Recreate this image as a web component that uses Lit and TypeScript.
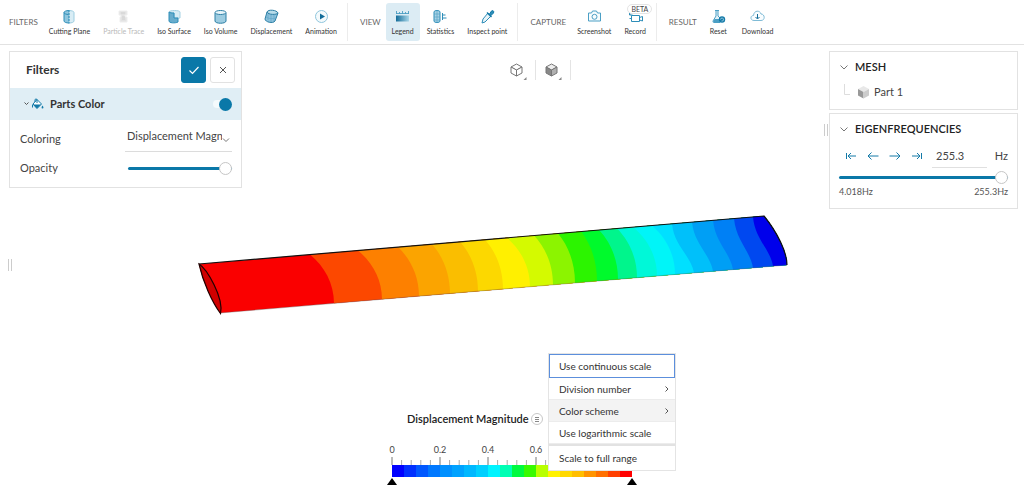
import { LitElement, html, css, svg } from "lit";
import { customElement, property, state } from "lit/decorators.js";
import { classMap } from "lit/directives/class-map.js";

const FONT = css`Lato, "Open Sans", sans-serif`;

const ICONS: Record<string, unknown> = {
  cutting: svg`<path d="M2 3.500v8.500c0 1 2 2 5 2V1.500c-3 0-5 1-5 2z" fill="#8fc6de" stroke="#2d8db8"/><path d="M2 3.500c0 1 2 2 5 2" fill="none" stroke="#2d8db8"/><path d="M7 1.500c3 0 5 1 5 2v8.500c0 1-2 2-5 2z" fill="#d9edf5" stroke="#9ccde0"/><path d="M7 1v13.500" stroke="#2d8db8" stroke-dasharray="2 1"/>`,
  particle: svg`<path d="M3 2h8v4H9v2h2v5H4V8h1V6H3z" fill="#e3e3e3" stroke="#eee"/><path d="M5 4h4M6 8h3M6 10h3" stroke="#d0d0d0"/>`,
  surface: svg`<path d="M2 3c0-2 11-2 11 0v6H7V4z" fill="#d9edf5" stroke="#a5d2e4"/><path d="M2 3c1 1 3 1 5 1v5h4v4c-3 1.500-9 1-9-1z" fill="#68adcd" stroke="#2d8db8"/>`,
  volume: svg`<path d="M2 4v8c0 3 11 3 11 0V4" fill="#9ccce1" stroke="#2d7fa5"/><ellipse cx="7.500" cy="3.500" rx="5.500" ry="2" fill="#e8f5fa" stroke="#2d7fa5"/>`,
  displacement: svg`<path d="M3 3 1 10c0 3 8 5 10 2l3-8" fill="#8dc2dc" stroke="#2d7fa5"/><path d="M3 3c1-3 10-2 11 1-1 2-10 2-11-1z" fill="#b8dcea" stroke="#2d7fa5"/><path d="M4 5v6M7 6v7M10 6v6M2 8c3 2 7 2 10 1" stroke="#5aa3c6" stroke-width=".6" fill="none"/>`,
  animation: svg`<circle cx="7.500" cy="7.500" r="6" fill="#f4fafc" stroke="#8fc6dd"/><path d="M6 4.500v6l5-3z" fill="#126c99"/>`,
  legend: svg`<path d="M1.500 2v2.500M4.500 3v1.500M7.500 2v2.500M10.500 3v1.500M13.500 2v2.500M1 4.500h13" stroke="#3a94bc" stroke-width=".8" fill="none"/><path d="M1 6.500h13v6H1z" fill="url(#lg)"/>`,
  statistics: svg`<path d="M1 3c0-2 6-2 6 0v9c0 2-6 2-6 0z" fill="#a9d3e5" stroke="#2d8db8"/><path d="M4 1v13M1 5h6M1 8h6M1 11h6" stroke="#5aa3c6" stroke-width=".7"/><path d="M9.500 4v7M9.500 6h3M9.500 9h4" stroke="#2d8db8"/>`,
  inspect: svg`<path d="m8 4 3 3-6 6-3 1 1-4z" fill="#e8f4f9" stroke="#2d8db8"/><path d="m7 3.500 4.500 4.500" stroke="#147aa8" stroke-width="1.500"/><path d="m9.500 5 2-3c1-1 3 0 2 2l-2.500 2.500z" fill="#2d8db8" stroke="#147aa8"/>`,
  screenshot: svg`<path d="M1.500 4h3l1-2h4l1 2h3v8h-12z" fill="#f7fcfe" stroke="#4b9fc5"/><circle cx="7.500" cy="7.800" r="2.500" fill="none" stroke="#4b9fc5"/>`,
  record: svg`<path d="M3.500 6.500h8v6h-8zM11.500 8.500l3-1v4.500l-3-1M3.500 9.500h-2" fill="none" stroke="#2d8db8"/><path d="M1.500 3v3h3M1.500 6l2-2M6 4.500h5" fill="none" stroke="#2d8db8"/>`,
  reset: svg`<path d="M4 1.500h4M5 2v5l-3 5c0 1 0 1.500 1 1.500h6V9L7 7V2" fill="#e4f2f8" stroke="#4b9fc5"/><path d="m3.500 10-1.500 3h6v-3z" fill="#4b9fc5"/><circle cx="11" cy="10.500" r="3.200" fill="#147aa8"/><path d="M9.500 10.500a1.500 1.500 0 1 1 1 1.500" stroke="#a9d3e5" fill="none" stroke-width=".8"/>`,
  download: svg`<path d="M4 11.500c-4 0-4-5-.5-5C4 1 10 1 11 5c4 0 4.500 6.500 0 6.500z" fill="#f9fdff" stroke="#7fbbd6"/><path d="M7.500 5v4.500M5.500 8l2 2 2-2" fill="none" stroke="#126c99"/>`,
};

type Tool = { id: string; label: string; disabled?: boolean; badge?: string };
const GROUPS: { title: string; tools: Tool[] }[] = [
  {
    title: "FILTERS",
    tools: [
      { id: "cutting", label: "Cutting Plane" },
      { id: "particle", label: "Particle Trace", disabled: true },
      { id: "surface", label: "Iso Surface" },
      { id: "volume", label: "Iso Volume" },
      { id: "displacement", label: "Displacement" },
      { id: "animation", label: "Animation" },
    ],
  },
  {
    title: "VIEW",
    tools: [
      { id: "legend", label: "Legend" },
      { id: "statistics", label: "Statistics" },
      { id: "inspect", label: "Inspect point" },
    ],
  },
  {
    title: "CAPTURE",
    tools: [
      { id: "screenshot", label: "Screenshot" },
      { id: "record", label: "Record", badge: "BETA" },
    ],
  },
  {
    title: "RESULT",
    tools: [
      { id: "reset", label: "Reset" },
      { id: "download", label: "Download" },
    ],
  },
];

@customElement("post-toolbar")
class PostToolbar extends LitElement {
  @state() active = "legend";

  static styles = css`
    :host { display: block; border-bottom: 1px solid #e2e2e2; background: #fff; }
    nav { display: flex; align-items: center; height: 44px; padding-left: 9px; }
    .group { display: flex; align-items: center; gap: 1px; }
    .group + .group { margin-left: 4px; padding-left: 12px; border-left: 1px solid #ececec; }
    .group:last-child { gap: 3px; }
    .title { font: 8px/12px ${FONT}; color: #666; margin-right: 4px; }
    button {
      display: flex; flex-direction: column; align-items: center; justify-content: flex-end; gap: 2px;
      position: relative; height: 38px; padding: 0 6px 5px; border: 0; border-radius: 3px;
      background: none; font: 7px/10px ${FONT}; color: #333; white-space: nowrap;
    }
    button:disabled { color: #b9b9b9; }
    button.active { background: #dcecf4; }
    svg { display: block; width: 15px; height: 15px; }
    .badge {
      position: absolute; top: 1px; left: 9px; padding: 0 3px; border: 1px solid #e4e4e4;
      border-radius: 6px; background: #fff; font: 7px/8px ${FONT}; color: #444;
    }
  `;

  render() {
    return html`<nav>
      ${GROUPS.map(
        (g) => html`<div class="group">
          <span class="title">${g.title}</span>
          ${g.tools.map(
            (t) => html`<button
              class=${classMap({ active: t.id === this.active })}
              ?disabled=${t.disabled}
              @click=${() => (this.active = t.id)}
            >
              <svg viewBox="0 0 15 15" aria-hidden="true">
                <defs><linearGradient id="lg"><stop stop-color="#126c99" /><stop offset="1" stop-color="#a9d6e8" /></linearGradient></defs>
                ${ICONS[t.id]}
              </svg>
              ${t.label} ${t.badge ? html`<span class="badge">${t.badge}</span>` : ""}
            </button>`
          )}
        </div>`
      )}
    </nav>`;
  }
}

const rangeStyles = css`
  input[type="range"] {
    appearance: none; display: block; width: 100%; height: 14px; margin: 0; background: none;
  }
  input[type="range"]::-webkit-slider-runnable-track { height: 3px; border-radius: 2px; background: #0a78a8; }
  input[type="range"]::-webkit-slider-thumb {
    appearance: none; box-sizing: border-box; width: 13px; height: 13px; margin-top: -5px;
    border: 1px solid #c6c6c6; border-radius: 50%; background: #fff;
  }
`;

@customElement("filters-panel")
class FiltersPanel extends LitElement {
  static styles = [
    rangeStyles,
    css`
      :host { display: block; box-sizing: border-box; border: 1px solid #e2e2e2; background: #fff; font: 11px/14px ${FONT}; color: #444; }
      header { display: flex; align-items: center; gap: 4px; height: 36px; padding: 0 6px 0 16px; }
      h2 { flex: 1; margin: 0; font-size: 12px; line-height: 16px; font-weight: 700; color: #333; }
      header button {
        display: grid; place-items: center; width: 25px; height: 26px; padding: 0;
        border: 1px solid #e2e2e2; border-radius: 3px; background: #fff;
      }
      header .apply { border-color: #0a78a8; background: #0a78a8; }
      .section { display: flex; align-items: center; height: 32px; padding: 0 9px 0 14px; background: #e0eef5; }
      h3 { flex: 1; margin: 0 0 0 6px; font-size: 11px; line-height: 14px; font-weight: 700; color: #333; }
      .toggle {
        appearance: none; display: flex; justify-content: flex-end; align-items: center; width: 19px; height: 8px;
        margin: 0; border-radius: 4px; background: #f4fafc;
      }
      .toggle::before { content: ""; width: 13px; height: 13px; flex: none; border-radius: 50%; background: #0a78a8; }
      .toggle:not(:checked) { justify-content: flex-start; }
      .rows { display: grid; grid-template-columns: 1fr 107px; row-gap: 9px; align-items: center; padding: 6px 9px 12px 10px; }
      .pick { display: flex; align-items: flex-start; height: 25px; border-bottom: 1px solid #dcdcdc; }
      select {
        appearance: none; flex: 1; min-width: 0; height: 20px; padding: 0 0 0 2px; border: 0; border-radius: 0;
        background: none; font: 11px/14px ${FONT}; color: #444; text-overflow: clip;
      }
      .pick svg { flex: none; margin: 10px 2px 0 0; }
      .slide { padding-left: 3px; }
      svg { display: block; }
    `,
  ];

  render() {
    return html`
      <header>
        <h2>Filters</h2>
        <button class="apply" aria-label="Apply">
          <svg width="12" height="12" viewBox="0 0 12 12"><path d="m1.500 6.500 3 3 6-6.500" fill="none" stroke="#fff" stroke-width="1.200" /></svg>
        </button>
        <button aria-label="Close">
          <svg width="10" height="10" viewBox="0 0 10 10"><path d="m2 2 6 6m0-6-6 6" stroke="#555" /></svg>
        </button>
      </header>
      <div class="section">
        <svg width="20" height="14" viewBox="0 0 20 14">
          <path d="m.5 5.500 2 2 2-2" fill="none" stroke="#555" />
          <path d="m9 7 4-4.500 4.500 4.500-4.500 4.500z" fill="#fff" stroke="#147aa8" />
          <path d="M9 7.500h8L13 11.500z" fill="#147aa8" />
          <path d="M11 5V3c0-1.500 2-1.500 2 0v3M8.500 7.500v3" fill="none" stroke="#147aa8" />
          <path d="M18.500 8.500c-1 1.500-1.500 3 0 3s1-1.500 0-3z" fill="#147aa8" />
        </svg>
        <h3><label for="on">Parts Color</label></h3>
        <input id="on" class="toggle" type="checkbox" checked />
      </div>
      <div class="rows">
        <label for="coloring">Coloring</label>
        <div class="pick">
          <select id="coloring"><option>Displacement Magnitude</option></select>
          <svg width="8" height="8" viewBox="0 0 8 8"><path d="m1 2.500 3 3 3-3" fill="none" stroke="#777" /></svg>
        </div>
        <label for="opacity">Opacity</label>
        <div class="slide"><input id="opacity" type="range" value="100" /></div>
      </div>
    `;
  }
}

@customElement("result-panels")
class ResultPanels extends LitElement {
  static styles = [
    rangeStyles,
    css`
      :host { display: flex; flex-direction: column; gap: 3px; font: 11px/14px ${FONT}; color: #444; }
      section { border: 1px solid #e2e2e2; background: #fff; padding: 8px 9px; }
      h2 { display: flex; align-items: center; gap: 6px; margin: 0; font-size: 11px; line-height: 14px; font-weight: 600; color: #222; }
      svg { display: block; flex: none; }
      .part { display: flex; align-items: center; gap: 4px; padding: 10px 0 1px 5px; }
      .part .cube { margin-left: 1px; }
      .step { display: flex; align-items: center; gap: 8px; padding: 8px 0 2px 5px; }
      .step button { padding: 0; border: 0; background: none; }
      .value { display: flex; flex: 1; justify-content: space-between; align-items: center; }
      .value input {
        box-sizing: border-box; width: 55px; height: 24px; padding: 0 0 0 4px; border: 0; border-bottom: 1px solid #e0e0e0;
        font: 11px/14px ${FONT}; color: #444; outline: 0;
      }
      .ends { display: flex; justify-content: space-between; padding: 2px 0; font-size: 9px; line-height: 12px; color: #555; }
    `,
  ];

  private chevron = html`<svg width="10" height="10" viewBox="0 0 10 10"><path d="m1.500 3.500 3.500 3.500 3.500-3.500" fill="none" stroke="#777" /></svg>`;

  private arrow(label: string, d: string) {
    return html`<button aria-label=${label}><svg width="14" height="12" viewBox="0 0 14 12"><path d=${d} fill="none" stroke="#147aa8" /></svg></button>`;
  }

  render() {
    return html`
      <section>
        <h2>${this.chevron}MESH</h2>
        <div class="part">
          <svg width="8" height="16" viewBox="0 0 8 16"><path d="M.5 0v10.500H6" fill="none" stroke="#ddd" /></svg>
          <svg class="cube" width="13" height="14" viewBox="0 0 13 14">
            <path d="m1 4 5.500-3L12 4 6.500 7z" fill="#e8e8e8" /><path d="m1 4 5.500 3v6.500L1 10.500z" fill="#999" /><path d="m12 4-5.500 3v6.500l5.500-3z" fill="#ccc" />
          </svg>
          Part 1
        </div>
      </section>
      <section>
        <h2>${this.chevron}EIGENFREQUENCIES</h2>
        <div class="step">
          ${this.arrow("First", "M2.500 3v6M12 6H4M7 3 4 6l3 3")} ${this.arrow("Previous", "M12.500 6H2M5.500 2.500 2 6l3.500 3.500")}
          ${this.arrow("Next", "M1.500 6H12M8.500 2.500 12 6 8.500 9.500")} ${this.arrow("Last", "M11.500 3v6M2 6h8M7 3l3 3-3 3")}
          <div class="value"><input id="freq" value="255.3" /><label for="freq">Hz</label></div>
        </div>
        <input type="range" value="100" aria-label="Frequency" />
        <div class="ends"><span>4.018Hz</span><span>255.3Hz</span></div>
      </section>
    `;
  }
}

// Colour bands ordered from the lowest value to the highest.
const SCALE = [
  "#0000ff", "#0030ff", "#0058ff", "#0078ff", "#0090ff", "#00a2ff", "#00b8ff", "#00d0ff", "#00f4ff", "#00ffb4",
  "#00fa40", "#38fa00", "#b8ff00", "#fff200", "#ffd800", "#ffbe00", "#ff9400", "#ff7000", "#ff4000", "#ff0000",
];

// Iso-lines of the wing from root to tip: x on the top edge, x on the bottom edge, colour towards the tip.
const LINES: [number, number, string][] = [
  [310, 334, "#fc4800"], [358, 382, "#fd8000"], [398, 419, "#fba400"], [432, 450, "#fabe00"], [460, 478, "#fcd800"],
  [485, 503, "#fff000"], [507, 530, "#d4fa00"], [534, 553, "#8cf400"], [558, 575, "#2cf400"], [581, 597, "#00fa2c"],
  [599, 618, "#00f58c"], [617, 637, "#00f8d8"], [633, 657, "#00f5f8"], [652, 675, "#00e0ff"], [672, 694, "#00c0fa"],
  [692, 713, "#009ff5"], [713, 733, "#0080f5"], [734, 753, "#0048f0"], [753, 773, "#0000eb"],
];

@customElement("wing-model")
class WingModel extends LitElement {
  static styles = css`
    :host { display: block; }
    svg { display: block; width: 100%; height: auto; }
  `;

  private band(top: number, bottom: number, index: number, color: string) {
    const ty = 264 - (top - 199) * 0.085;
    const by = 313 - (bottom - 220) * 0.085;
    const w = bottom - top;
    const late = index > 13;
    const c1 = late ? `${top + 2} ${ty + 22}` : `${top + w * 0.6} ${ty + 12}`;
    const c2 = late ? `${bottom - 3} ${by - 17}` : `${bottom} ${by - 20}`;
    return svg`<path fill=${color} d=${`M${top} ${ty - 4}V${ty}C${c1} ${c2} ${bottom} ${by}V330H800V200H${top}z`} />`;
  }

  render() {
    const outline = "M199 264 764 216C777 232 787 252 787 265L220 313C210 296 202 280 199 264z";
    return html`<svg viewBox="0 0 1024 330" role="img" aria-label="Wing displacement magnitude">
      <defs><clipPath id="wing"><path d=${outline} /></clipPath></defs>
      <g clip-path="url(#wing)">
        <path d="M190 200h610v130H190z" fill="#fa0000" />
        ${LINES.map(([t, b, c], i) => this.band(t, b, i, c))}
      </g>
      <path d="M220 313 787 265" stroke="#555" stroke-width=".7" opacity=".5" />
      <path d="M199 264 764 216C777 232 787 252 787 265" fill="none" stroke="#111" stroke-width="1.200" />
      <path d="M199 264C207 269 224 298 220.500 313.500 212 302 203 282 199 264z" fill="#d00000" stroke="#200" stroke-width="1.200" />
    </svg>`;
  }
}

@customElement("color-legend")
class ColorLegend extends LitElement {
  @property({ type: Boolean }) open = true;

  static styles = css`
    :host { display: block; position: relative; width: 240px; font: 10px/14px ${FONT}; color: #444; }
    .title { display: flex; align-items: center; gap: 2px; padding-left: 15px; font-size: 11px; font-weight: 600; color: #222; }
    .title button { display: grid; place-items: center; width: 12px; height: 12px; padding: 0; border: 1px solid #c8c8c8; border-radius: 50%; background: #fff; }
    .numbers { display: grid; grid-template-columns: repeat(5, 20%); margin: 18px 0 0 -24px; width: 100%; font-size: 9px; line-height: 12px; text-align: center; }
    svg { display: block; }
    .scale { width: 100%; height: 9px; overflow: visible; }
    .bar { display: grid; grid-auto-flow: column; grid-auto-columns: 1fr; height: 12px; }
    .ends { display: flex; justify-content: space-between; margin: 1px -5px 0; }
    .menu {
      position: absolute; left: 157px; bottom: 15px; box-sizing: border-box; width: 126px;
      background: #fff; box-shadow: 0 0 0 1px #e4e4e4;
    }
    .menu button {
      display: flex; justify-content: space-between; align-items: center; box-sizing: border-box; width: 100%; height: 22px;
      padding: 0 5px 0 10px; border: 0; border-bottom: 1px solid #ececec; background: #fff; font: 10px/14px ${FONT}; color: #333;
    }
    .menu .focus { height: 24px; padding-left: 9px; border: 1px solid #5c8fdc; }
    .menu .hover { background: #f3f3f3; }
    .menu .last { border-top: 2px solid #e2e2e2; border-bottom: 0; height: 26px; }
  `;

  render() {
    const chevron = html`<svg width="6" height="8" viewBox="0 0 6 8"><path d="m1.500 1.500 2.500 2.500-2.500 2.500" fill="none" stroke="#555" /></svg>`;
    const end = html`<svg width="10" height="7" viewBox="0 0 10 7"><path d="M5 0 10 7H0z" fill="#000" /></svg>`;
    return html`
      <div class="title">
        Displacement Magnitude
        <button aria-label="Legend options" @click=${() => (this.open = !this.open)}>
          <svg width="4" height="5" viewBox="0 0 4 5"><path d="M0 .5h4M0 2.500h4M0 4.500h4" stroke="#555" stroke-width=".7" /></svg>
        </button>
      </div>
      <div class="numbers">${["0", "0.2", "0.4", "0.6"].map((n) => html`<span>${n}</span>`)}</div>
      <svg class="scale" viewBox="0 0 240 9" preserveAspectRatio="none">
        ${Array.from({ length: 26 }, (_, i) => svg`<path d=${`M${i * 9.6} 9V${i % 5 ? 4 : 1}`} stroke=${i % 5 ? "#aaa" : "#777"} />`)}
      </svg>
      <div class="bar">${SCALE.map((c) => html`<i style="background:${c}"></i>`)}</div>
      <div class="ends">${end}${end}</div>
      ${this.open
        ? html`<div class="menu">
            <button class="focus">Use continuous scale</button>
            <button>Division number ${chevron}</button>
            <button class="hover">Color scheme ${chevron}</button>
            <button>Use logarithmic scale</button>
            <button class="last">Scale to full range</button>
          </div>`
        : ""}
    `;
  }
}

@customElement("app-root")
class AppRoot extends LitElement {
  static styles = css`
    :host { display: flex; flex-direction: column; min-height: 100vh; background: #fff; font-family: ${FONT}; }
    main { flex: 1; display: grid; grid-template-columns: 233px 1fr auto 189px; grid-template-rows: auto 1fr auto; padding: 0 6px 5px 9px; }
    .stage { grid-area: 1 / 1 / -1 / -1; margin: -45px -6px 0 -9px; }
    filters-panel { grid-area: 1 / 1; align-self: start; margin-top: 6px; z-index: 1; }
    result-panels { grid-area: 1 / 4; align-self: start; margin-top: 6px; z-index: 1; }
    .grip { width: 2px; height: 12px; border: solid #ccc; border-width: 0 1px; }
    .left { grid-area: 1 / 1 / -1 / 2; align-self: center; margin-left: -1px; }
    .right { grid-area: 1 / 3; margin: 79px 1px 0 0; }
    .views { grid-area: 1 / 1 / 2 / -1; justify-self: center; align-self: start; display: flex; margin: 15px 0 0 44px; z-index: 1; }
    .views button { display: flex; align-items: center; height: 20px; padding: 0 8px 0 6px; border: 0; border-right: 1px solid #e4e4e4; background: none; }
    color-legend { grid-area: 3 / 1 / 4 / -1; justify-self: center; margin-right: 3px; z-index: 1; }
  `;

  private cube(solid: boolean) {
    return html`<svg width="20" height="20" viewBox="0 0 20 20">
      <path d="m4 7 5.500-3L15 7 9.500 10z" fill=${solid ? "#eee" : "#fff"} stroke="#777" />
      <path d="m4 7 5.500 3v6L4 13z" fill=${solid ? "#888" : "#fff"} stroke="#777" />
      <path d="m15 7-5.500 3v6l5.500-3z" fill=${solid ? "#b0b0b0" : "#fff"} stroke="#777" />
      <path d="M19.500 17v3h-3z" fill="#888" />
    </svg>`;
  }

  render() {
    return html`
      <post-toolbar></post-toolbar>
      <main>
        <div class="stage"><wing-model></wing-model></div>
        <filters-panel></filters-panel>
        <div class="grip left"></div>
        <div class="views">
          <button aria-label="Wireframe view">${this.cube(false)}</button>
          <button aria-label="Surface view">${this.cube(true)}</button>
        </div>
        <div class="grip right"></div>
        <result-panels></result-panels>
        <color-legend></color-legend>
      </main>
    `;
  }
}
